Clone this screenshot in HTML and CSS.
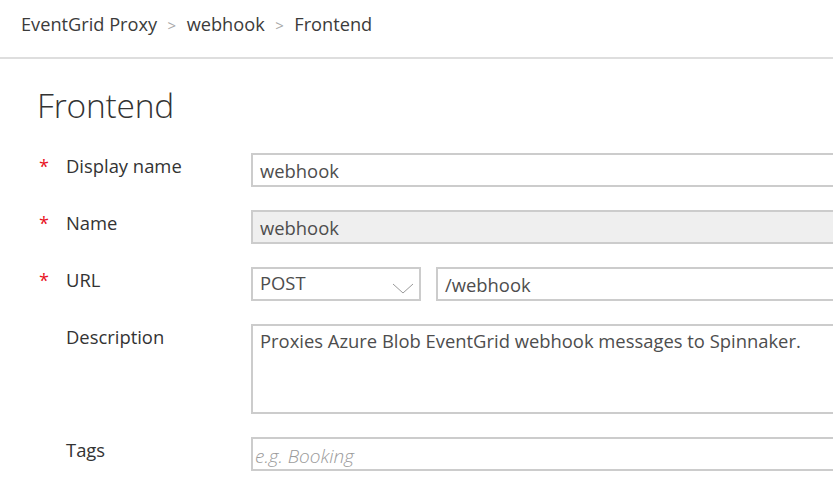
FILE: index.html
```html
<!DOCTYPE html>
<html>
<head>
<meta charset="utf-8">
<link rel="stylesheet" href="styles.css">
</head>
<body>
<header class="crumbs">
  <span class="crumb">EventGrid Proxy</span>
  <span class="sep">&gt;</span>
  <span class="crumb">webhook</span>
  <span class="sep">&gt;</span>
  <span class="crumb">Frontend</span>
</header>
<main class="panel">
  <h1 class="title">Frontend</h1>
  <div class="form">
    <div class="row">
      <div class="label"><span class="req">*</span><span>Display name</span></div>
      <div class="field"><div class="box">webhook</div></div>
    </div>
    <div class="row">
      <div class="label"><span class="req">*</span><span>Name</span></div>
      <div class="field"><div class="box disabled">webhook</div></div>
    </div>
    <div class="row">
      <div class="label"><span class="req">*</span><span>URL</span></div>
      <div class="field split">
        <div class="box select">POST
          <svg class="chev" width="22" height="11" viewBox="0 0 22 11"><path d="M1 1 L11 10 L21 1" fill="none" stroke="#9a9a9a" stroke-width="1"/></svg>
        </div>
        <div class="box grow">/webhook</div>
      </div>
    </div>
    <div class="row">
      <div class="label"><span class="req none"></span><span>Description</span></div>
      <div class="field"><div class="box area">Proxies Azure Blob EventGrid webhook messages to Spinnaker.</div></div>
    </div>
    <div class="row">
      <div class="label"><span class="req none"></span><span>Tags</span></div>
      <div class="field"><div class="box placeholder">e.g. Booking</div></div>
    </div>
  </div>
</main>
</body>
</html>
```
FILE: styles.css
```css
html, body {
  margin: 0;
  padding: 0;
  background: #fff;
  overflow: hidden;
}
body {
  font-family: "Open Sans", "Noto Sans", sans-serif;
  color: #333;
  width: 833px;
  height: 497px;
}
.crumbs {
  display: flex;
  align-items: flex-start;
  padding: 12px 0 0 21px;
  box-sizing: border-box;
  height: 59px;
  border-bottom: 2px solid #dedede;
  font-size: 18.2px;
  color: #3b3b3b;
  gap: 10.5px;
}
.sep {
  color: #a8a8a8;
  font-size: 15px;
  padding-top: 3px;
}
.panel {
  padding: 26px 0 0 37px;
}
.title {
  margin: 0;
  font-weight: 300;
  font-size: 33.5px;
  line-height: 40px;
  color: #333;
  letter-spacing: -0.2px;
}
.form {
  margin-top: 28px;
  display: flex;
  flex-direction: column;
  gap: 23px;
}
.row {
  display: flex;
}
.label {
  width: 214px;
  display: flex;
  font-size: 18.4px;
  color: #333;
  padding-top: 1px;
  line-height: 24px;
}
.req {
  width: 29px;
  color: #e81123;
  font-size: 18px;
  padding-left: 2px;
  box-sizing: border-box;
}
.field {
  flex: 1;
  min-width: 0;
  margin-right: -40px;
}
.split {
  display: flex;
  gap: 15px;
}
.box {
  height: 34px;
  box-sizing: border-box;
  border: 2px solid #cccccc;
  font-size: 18.4px;
  color: #4d4d4d;
  padding: 3px 0 0 7px;
  line-height: 26px;
  background: #fff;
}
.disabled {
  background: #efefef;
}
.select {
  width: 170px;
  flex: none;
  position: relative;
  padding-top: 1px;
}
.chev {
  position: absolute;
  right: 5px;
  top: 14px;
}
.grow {
  flex: 1;
}
.area {
  height: 90px;
  padding-top: 2px;
}
.placeholder {
  font-style: italic;
  color: #9b9b9b;
  padding: 4px 0 0 2px;
  font-weight: 300;
  font-size: 19px;
}
```
